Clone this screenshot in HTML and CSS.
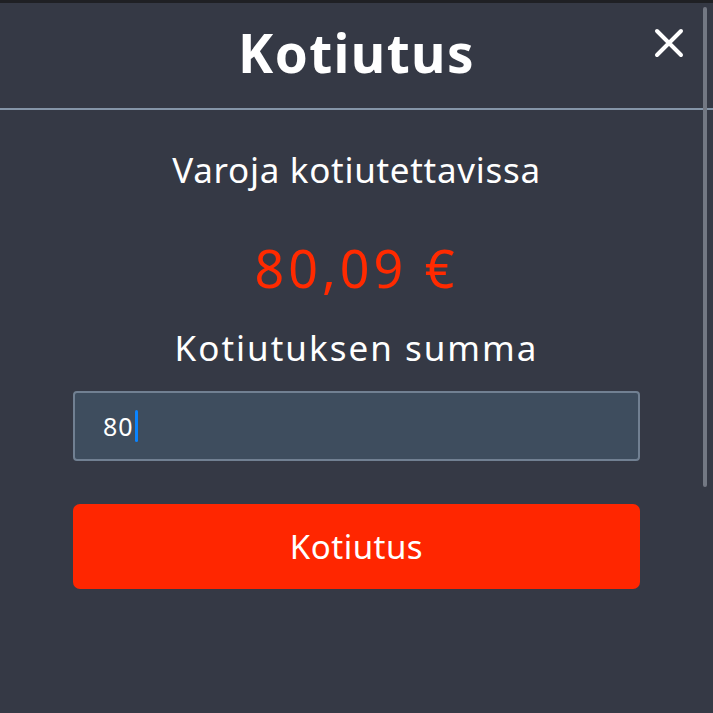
FILE: index.html
```html
<!DOCTYPE html>
<html lang="fi">
<head>
    <meta charset="UTF-8">
    <meta name="viewport" content="width=device-width, initial-scale=1.0">
    <title>Kotiutus</title>
    <link rel="stylesheet" href="styles.css">
</head>
<body>
    <div class="top-strip"></div>
    <div class="modal">
        <div class="modal-header">
            <h1 class="modal-title">Kotiutus</h1>
            <button class="close-btn" aria-label="Sulje">
                <svg width="30" height="30" viewBox="0 0 30 30">
                    <path d="M3 3 L27 27 M27 3 L3 27" stroke="#fff" stroke-width="4" stroke-linecap="round"/>
                </svg>
            </button>
        </div>
        <div class="modal-body">
            <div class="label">Varoja kotiutettavissa</div>
            <div class="balance">80,09 €</div>
            <div class="label label-sum">Kotiutuksen summa</div>
            <div class="amount-input"><span class="amount-value">80</span><span class="caret"></span></div>
            <button class="submit-btn">Kotiutus</button>
        </div>
        <div class="scroll-thumb"></div>
    </div>
</body>
</html>
```

FILE: styles.css
```css
html, body {
    margin: 0;
    height: 100%;
}
body {
    font-family: 'Noto Sans', 'Open Sans', sans-serif;
    background-color: #353945;
    color: #fff;
    overflow: hidden;
}
.top-strip {
    height: 3px;
    background: #1f2024;
}
.modal {
    position: relative;
}
.modal-header {
    height: 105px;
    border-bottom: 2px solid #8595a8;
    display: flex;
    align-items: center;
    justify-content: center;
    position: relative;
}
.modal-title {
    margin: 0 0 7px;
    font-size: 53px;
    font-weight: 700;
    letter-spacing: 1.4px;
}
.close-btn {
    position: absolute;
    right: 29px;
    top: 25px;
    background: none;
    border: none;
    padding: 0;
    cursor: pointer;
}
.modal-body {
    display: flex;
    flex-direction: column;
    align-items: center;
    padding: 38px 73px 0;
}
.label {
    font-size: 35px;
    line-height: 44px;
    letter-spacing: 0.7px;
}
.label-sum {
    letter-spacing: 2px;
}
.balance {
    color: #ff2a00;
    font-size: 52px;
    line-height: 60px;
    margin: 46px 0 28px;
    letter-spacing: 4px;
}
.amount-input {
    align-self: stretch;
    box-sizing: border-box;
    margin-top: 21px;
    height: 70px;
    background: #3e4d5e;
    border: 2px solid #718092;
    border-radius: 4px;
    display: flex;
    align-items: center;
    padding-left: 28px;
    font-size: 25px;
    letter-spacing: 1px;
}
.caret {
    width: 3px;
    height: 32px;
    background: #0a84ff;
    border-radius: 2px;
    margin-left: 1px;
}
.submit-btn {
    align-self: stretch;
    margin-top: 43px;
    height: 85px;
    background: #ff2600;
    border: none;
    border-radius: 7px;
    color: #fff;
    font-family: inherit;
    font-size: 33px;
    letter-spacing: 0.5px;
    cursor: pointer;
}
.scroll-thumb {
    position: absolute;
    right: 6px;
    top: 4px;
    width: 4px;
    height: 480px;
    border-radius: 2px;
    background: #737883;
}
```
